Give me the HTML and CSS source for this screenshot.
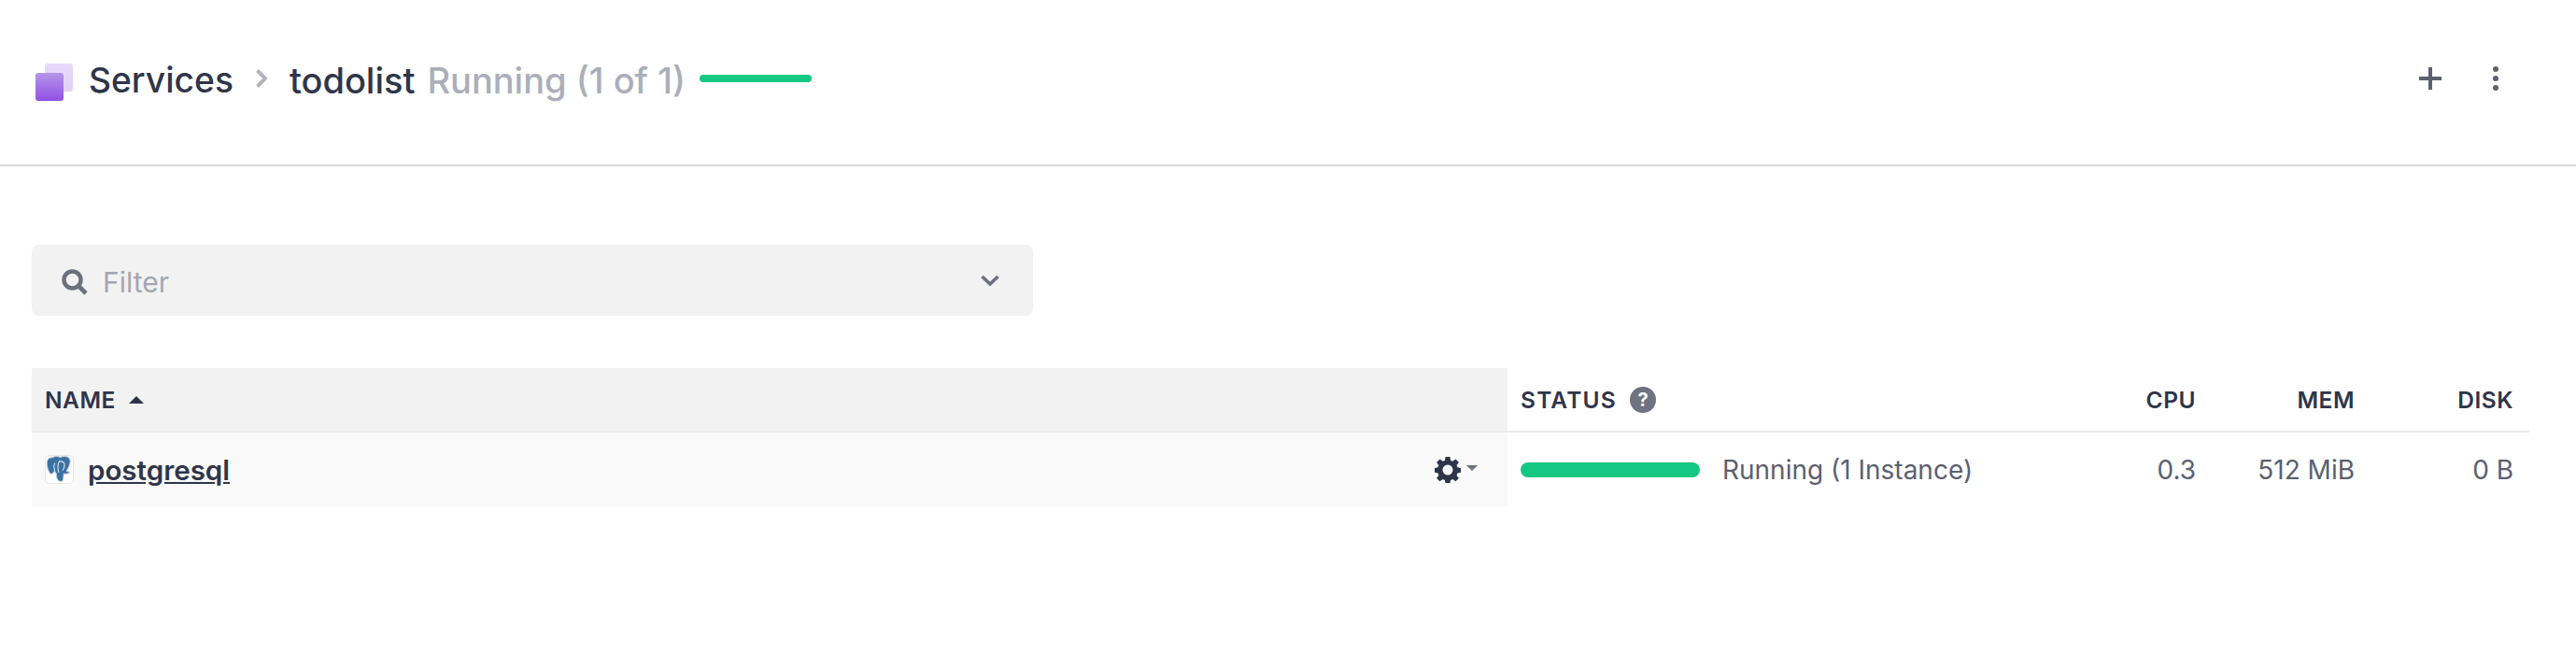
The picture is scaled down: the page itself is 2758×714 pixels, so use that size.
FILE: index.html
```html
<!DOCTYPE html>
<html lang="en">
<head>
<meta charset="utf-8">
<title>Services - todolist</title>
<link rel="stylesheet" href="styles.css">
</head>
<body>
<header class="page-header">
  <nav class="crumbs">
    <svg class="services-icon" width="40" height="40" viewBox="0 0 40 40">
      <defs>
        <linearGradient id="front" x1="0" y1="0" x2="0" y2="1"><stop offset="0" stop-color="#b596e8"/><stop offset="1" stop-color="#9350e6"/></linearGradient>
        <linearGradient id="back" x1="0" y1="0" x2="0" y2="1"><stop offset="0" stop-color="#e8daf9"/><stop offset="1" stop-color="#e2cff6"/></linearGradient>
      </defs>
      <rect x="10" y="0" width="30" height="30" rx="3" fill="url(#back)"/>
      <rect x="0" y="10" width="30" height="30" rx="3" fill="url(#front)"/>
    </svg>
    <span class="crumb services">Services</span>
    <svg class="crumb-sep" width="12" height="20" viewBox="0 0 12 20"><path d="M1.500 1.500 10 10 1.500 18.500" fill="none" stroke="#b2b3bd" stroke-width="4"/></svg>
    <span class="crumb">todolist</span>
    <span class="crumb muted">Running (1 of 1)</span>
    <span class="mini-bar"></span>
  </nav>
  <div class="actions">
    <svg width="24" height="24" viewBox="0 0 24 24"><path d="M10 0h4v10h10v4H14v10h-4V14H0v-4h10z" fill="#5c6070"/></svg>
    <svg width="6" height="26" viewBox="0 0 6 26"><circle cx="3" cy="3" r="3" fill="#5c6070"/><circle cx="3" cy="13" r="3" fill="#5c6070"/><circle cx="3" cy="23" r="3" fill="#5c6070"/></svg>
  </div>
</header>
<main class="content">
  <div class="filter">
    <svg class="search" width="28" height="28" viewBox="0 0 28 28"><circle cx="11.500" cy="11.500" r="9" fill="none" stroke="#6b6f7e" stroke-width="4.400"/><path d="M18 18l8 8" stroke="#6b6f7e" stroke-width="4.600" fill="none"/></svg>
    <span class="filter-text">Filter</span>
    <svg class="chevron" width="20" height="13" viewBox="0 0 20 13"><path d="M1.500 2 10 10 18.500 2" fill="none" stroke="#6b6f7e" stroke-width="3.600"/></svg>
  </div>
  <table class="services-table">
    <colgroup>
      <col class="col-name"><col class="col-status"><col class="col-num"><col class="col-num"><col class="col-num">
    </colgroup>
    <thead>
      <tr>
        <th class="sorted"><span class="th-inner">NAME<span class="sort-caret"></span></span></th>
        <th><span class="th-inner status-head">STATUS<span class="help">?</span></span></th>
        <th class="num">CPU</th>
        <th class="num">MEM</th>
        <th class="num">DISK</th>
      </tr>
    </thead>
    <tbody>
      <tr>
        <td class="name-cell">
          <div class="name-inner">
            <span class="pg-icon">
              <svg width="29" height="29" viewBox="0 0 26 26">
                <path d="M6 1.500C3 1.500 1 3.500 1 7c0 3.500 1.500 8.500 3.500 10 1.500 1 2.500-.5 3.500-2 1 .5 1.500 1 2 1.500 0 3 .5 7 3.500 8 2.500.5 3.500-1 3.500-4 0-1.500 0-2.500.5-3.500 2 .5 4.500 0 5.500-1 .5-.8-2-.5-3-1.500 2-3 3.500-6.500 3.500-9.500 0-3-2-4.500-5.500-4.500-1.500 0-3 .3-4 .8-1-.5-2-.8-3.500-.8-1.500 0-3 .5-4 1z" fill="#3a72a2" stroke="#c9d3dc" stroke-width=".9"/>
                <path d="M9 7c-1.500 1-1.500 5 0 8M13 5c-1.500 3-1.800 7-.5 11M13 5c3 0 5 1.500 5 4 0 2-1 4-2 5" fill="none" stroke="#d5e0e9" stroke-width="1"/>
              </svg>
            </span>
            <a class="service-link" href="#">postgresql</a>
            <span class="gear-menu">
              <svg width="28" height="28" viewBox="0 0 28 28"><path fill-rule="evenodd" d="M11.600 0h4.800l.7 3.900 2.200.9 3.200-2.300 3.400 3.400-2.300 3.200.9 2.200 3.900.7v4.800l-3.900.7-.9 2.200 2.300 3.200-3.400 3.400-3.200-2.300-2.200.9-.7 3.900h-4.800l-.7-3.900-2.200-.9-3.200 2.300-3.400-3.400 2.300-3.200-.9-2.200-3.900-.7v-4.800l3.900-.7.9-2.200-2.300-3.200 3.400-3.400 3.200 2.300 2.200-.9zM14 8.500a5.500 5.500 0 1 0 0 11 5.500 5.500 0 0 0 0-11z" fill="#2f3549"/></svg>
              <span class="gear-caret"></span>
            </span>
          </div>
        </td>
        <td>
          <div class="status-inner">
            <span class="status-bar"></span>
            <span>Running (1 Instance)</span>
          </div>
        </td>
        <td class="num">0.3</td>
        <td class="num">512 MiB</td>
        <td class="num">0 B</td>
      </tr>
    </tbody>
  </table>
</main>
</body>
</html>
```
FILE: styles.css
```css
* { box-sizing: border-box; }
html, body { margin: 0; padding: 0; background: #fff; }
body { font-family: Inter, "Liberation Sans", sans-serif; color: #2f3549; }

.page-header {
  height: 178px;
  border-bottom: 2px solid #d9d8de;
  display: flex;
  align-items: center;
  justify-content: space-between;
  padding: 0 83px 8px 38px;
}
.crumbs { display: flex; align-items: center; }
.services-icon { margin-right: 17px; margin-top: 8px; }
.crumb { font-size: 38px; font-weight: 500; line-height: 44px; white-space: nowrap; margin-top: 4px; }
.services { font-size: 37.200px; }
.crumb-sep { margin: 0 24px 0 24px; }
.muted { color: #acaeb9; margin-left: 13px; }
.mini-bar { width: 120px; height: 8px; border-radius: 4px; background: #14c884; margin-left: 15px; }
.actions { display: flex; align-items: center; gap: 55px; }

.content { padding: 84px 50px 0 34px; }
.filter {
  width: 1072px;
  height: 76px;
  border-radius: 8px;
  background: #f2f2f2;
  display: flex;
  align-items: center;
  padding: 0 36px 0 32px;
}
.search { margin-right: 16px; margin-top: 4px; }
.filter-text { font-size: 30px; color: #a3a6b1; flex: 1; margin-top: 3px; }

.services-table {
  width: 100%;
  margin-top: 56px;
  border-collapse: collapse;
  table-layout: fixed;
}
.col-name { width: 1580px; }
.col-num { width: 170px; }
.services-table th {
  height: 68px;
  padding: 0 17px 0 14px;
  font-size: 24.500px;
  font-weight: 600;
  text-align: left;
  color: #2f3549;
  letter-spacing: .5px;
  border-bottom: 2px solid #ebebeb;
}
.services-table th.sorted { background: #f2f2f2; }
.services-table td {
  height: 80px;
  padding: 0 17px 0 14px;
  font-size: 28px;
  color: #5c6070;
}
.services-table .num { text-align: right; }
.th-inner { display: flex; align-items: center; }
.status-head { letter-spacing: 1.200px; }
.sort-caret {
  margin-left: 14px;
  border-left: 8px solid transparent;
  border-right: 8px solid transparent;
  border-bottom: 8px solid #2f3549;
}
.help {
  width: 28px;
  height: 28px;
  border-radius: 50%;
  margin-left: 14px;
  background: #6f7280;
  color: #fff;
  font-size: 20px;
  font-weight: 700;
  letter-spacing: 0;
  display: flex;
  align-items: center;
  justify-content: center;
}
.services-table .name-cell { background: #f9f9f9; }
.name-inner { display: flex; align-items: center; }
.pg-icon {
  width: 31px;
  height: 31px;
  border: 1px solid #e6e6e6;
  border-radius: 5px;
  background: #fff;
  display: flex;
  align-items: center;
  justify-content: center;
  margin-right: 15px;
}
.service-link {
  font-size: 29.500px;
  font-weight: 600;
  color: #2f3549;
  text-decoration: underline;
  flex: 1;
}
.gear-menu { display: flex; align-items: center; gap: 6px; margin-right: 15px; }
.gear-caret {
  border-left: 6px solid transparent;
  border-right: 6px solid transparent;
  border-top: 6px solid #6f7280;
  margin-top: -4px;
}
.status-inner { display: flex; align-items: center; gap: 24px; }
.status-bar { width: 192px; height: 16px; border-radius: 8px; background: #14c884; }
```
